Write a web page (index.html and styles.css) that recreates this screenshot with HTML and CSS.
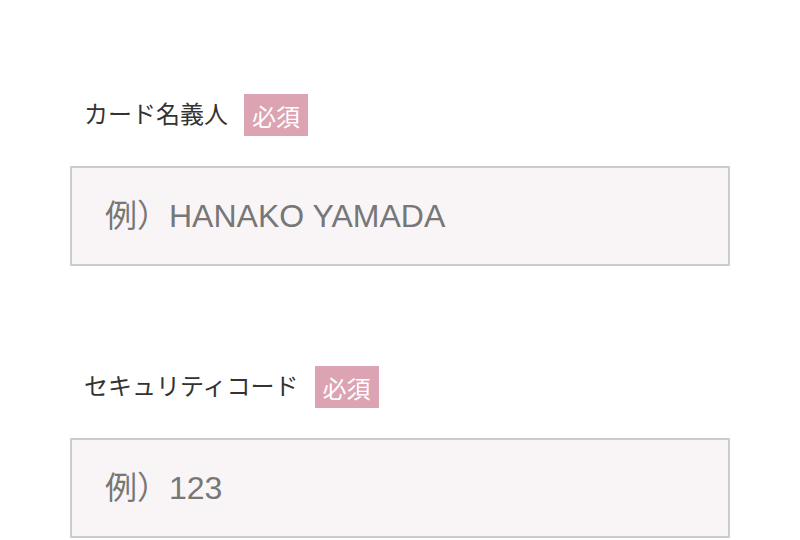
FILE: index.html
```html
<!DOCTYPE html>
<html lang="ja">
<head>
<meta charset="utf-8">
<link rel="stylesheet" href="styles.css">
</head>
<body>
<form class="form">
  <div class="field">
    <label class="label" for="name"><span class="label-text">カード名義人</span><span class="badge">必須</span></label>
    <input class="input" id="name" type="text" placeholder="例）HANAKO YAMADA">
  </div>
  <div class="field">
    <label class="label" for="cvc"><span class="label-text">セキュリティコード</span><span class="badge">必須</span></label>
    <input class="input" id="cvc" type="text" placeholder="例）123">
  </div>
</form>
</body>
</html>
```

FILE: styles.css
```css
html, body {
  margin: 0;
  padding: 0;
  background: #fff;
}
body {
  font-family: "Liberation Sans", "Noto Sans CJK JP", sans-serif;
  color: #333;
}
.form {
  width: 660px;
  padding: 94px 0 0 70px;
  display: flex;
  flex-direction: column;
  gap: 100px;
}
.field {
  display: flex;
  flex-direction: column;
  gap: 30px;
}
.label {
  display: flex;
  align-items: center;
  gap: 16px;
  padding-left: 14px;
}
.label-text {
  font-size: 24px;
  line-height: 1;
  color: #333;
}
.badge {
  display: inline-flex;
  align-items: center;
  justify-content: center;
  height: 42px;
  padding: 0 8px;
  background: #dca3b2;
  color: #fff;
  font-size: 24px;
}
.input {
  box-sizing: border-box;
  width: 660px;
  height: 100px;
  margin: 0;
  border: 2px solid #ccc;
  background: #f9f5f6;
  padding: 0 0 0 33px;
  font-family: "Liberation Sans", "Noto Sans CJK JP", sans-serif;
  font-size: 32px;
  color: #333;
  outline: none;
}
.input::placeholder {
  color: #777;
  opacity: 1;
}
```
